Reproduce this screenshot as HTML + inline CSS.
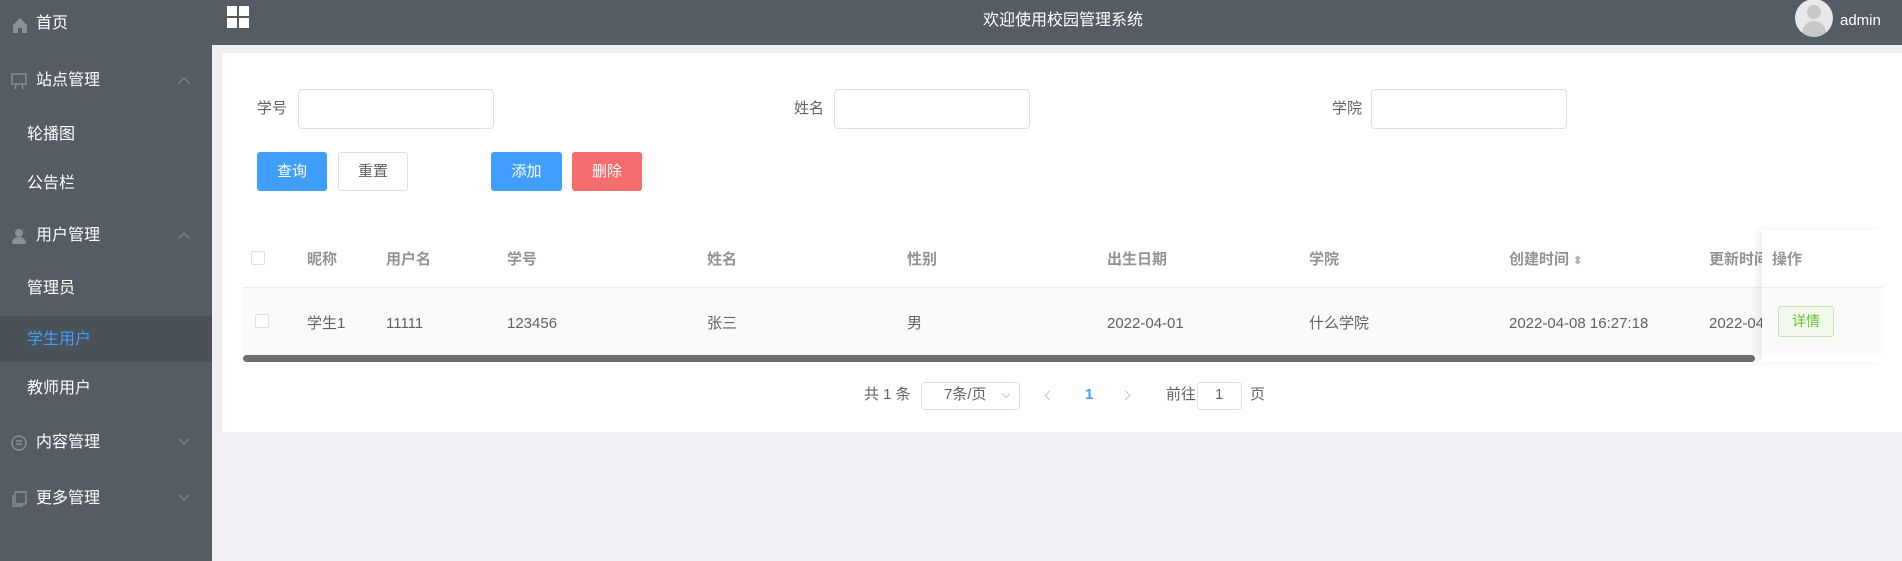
<!DOCTYPE html>
<html><head><meta charset="utf-8"><style>
*{margin:0;padding:0;box-sizing:border-box}
body{width:1902px;height:561px;overflow:hidden;background:#f0f0f4;font-family:"Liberation Sans","Noto Sans CJK SC",sans-serif;position:relative;color:#606266}
.a{position:absolute;white-space:nowrap;line-height:20px}
#side{left:0;top:0;width:212px;height:561px;background:#545c64}
.mi{position:absolute;left:0;width:212px;color:#fff;font-size:16px;line-height:20px;height:20px}
.ic{position:absolute;left:12px;width:18px;height:18px}
.chev{position:absolute;left:180px;width:8px;height:8px;border-left:1px solid #8a9098;border-top:1px solid #8a9098}
#hdr{left:212px;top:0;width:1690px;height:45px;background:#545c64}
#panel{left:222px;top:53px;width:1680px;height:379px;background:#fff}
.lbl{font-size:15px;color:#606266}
.inp{position:absolute;border:1px solid #dcdfe6;border-radius:4px;background:#fff}
.btn{position:absolute;border-radius:3px;font-size:15px;text-align:center;line-height:39px;color:#fff}
.th{font-size:15px;color:#909399;font-weight:bold;top:250px}
.td{font-size:15px;color:#606266;top:314px}
.cb{position:absolute;width:14px;height:14px;border:1px solid #dcdfe6;border-radius:2px;background:#fff}
</style></head><body>
<div id="side" class="a">
 <div class="mi" style="top:14px"><svg class="ic" style="left:11px;top:2px" viewBox="0 0 18 18"><path d="M9 2L2 9v8h5v-5h4v5h5V9z" fill="#8a9098"/></svg><span style="position:absolute;left:36px">首页</span></div>
 <div class="mi" style="top:71px"><svg class="ic" style="left:10px;top:1px" viewBox="0 0 18 18" fill="none" stroke="#8a9098" stroke-width="1.4"><rect x="2" y="2" width="14" height="10"/><path d="M6 12l-1 5M12 12l1 5"/></svg><span style="position:absolute;left:36px">站点管理</span><div class="chev" style="top:8px;transform:rotate(45deg)"></div></div>
 <div class="mi" style="top:125px"><span style="position:absolute;left:27px">轮播图</span></div>
 <div class="mi" style="top:174px"><span style="position:absolute;left:27px">公告栏</span></div>
 <div class="mi" style="top:226px"><svg class="ic" style="left:10px;top:1px" viewBox="0 0 18 18"><circle cx="9" cy="6" r="4" fill="#8a9098"/><path d="M2 17c0-5 3-7 7-7s7 2 7 7z" fill="#8a9098"/></svg><span style="position:absolute;left:36px">用户管理</span><div class="chev" style="top:8px;transform:rotate(45deg)"></div></div>
 <div class="mi" style="top:279px"><span style="position:absolute;left:27px">管理员</span></div>
 <div class="a" style="left:0;top:316px;width:212px;height:46px;background:#4a5159"></div>
 <div class="mi" style="top:330px;color:#409eff"><span style="position:absolute;left:27px">学生用户</span></div>
 <div class="mi" style="top:379px"><span style="position:absolute;left:27px">教师用户</span></div>
 <div class="mi" style="top:433px"><svg class="ic" style="left:10px;top:1px" viewBox="0 0 18 18" fill="none" stroke="#8a9098" stroke-width="1.4"><circle cx="9" cy="9" r="7"/><path d="M6 7h6M6 10h6"/></svg><span style="position:absolute;left:36px">内容管理</span><div class="chev" style="top:2px;transform:rotate(225deg)"></div></div>
 <div class="mi" style="top:489px"><svg class="ic" style="left:10px;top:1px" viewBox="0 0 18 18" fill="none" stroke="#8a9098" stroke-width="1.4"><rect x="5" y="2" width="11" height="12" rx="1"/><path d="M3 5v11h10"/></svg><span style="position:absolute;left:36px">更多管理</span><div class="chev" style="top:2px;transform:rotate(225deg)"></div></div>
</div>
<div id="hdr" class="a">
 <div class="a" style="left:15px;top:6px;width:10px;height:10px;background:#fff"></div>
 <div class="a" style="left:27px;top:6px;width:10px;height:10px;background:#fff"></div>
 <div class="a" style="left:15px;top:18px;width:10px;height:10px;background:#fff"></div>
 <div class="a" style="left:27px;top:18px;width:10px;height:10px;background:#fff"></div>
 <div class="a" style="left:740px;top:11px;width:222px;text-align:center;color:#fff;font-size:16px">欢迎使用校园管理系统</div>
 <div class="a" style="left:1583px;top:-1px;width:38px;height:38px;border-radius:50%;background:#e8e8e8;overflow:hidden"><div class="a" style="left:12px;top:6px;width:14px;height:14px;border-radius:50%;background:#c8c8c8"></div><div class="a" style="left:7px;top:22px;width:24px;height:18px;border-radius:12px 12px 0 0;background:#c8c8c8"></div></div>
 <div class="a" style="left:1628px;top:11px;color:#fff;font-size:15px">admin</div>
</div>
<div id="panel" class="a"></div>
<div class="a lbl" style="left:257px;top:99px">学号</div>
<div class="inp" style="left:298px;top:89px;width:196px;height:40px"></div>
<div class="a lbl" style="left:794px;top:99px">姓名</div>
<div class="inp" style="left:834px;top:89px;width:196px;height:40px"></div>
<div class="a lbl" style="left:1332px;top:99px">学院</div>
<div class="inp" style="left:1371px;top:89px;width:196px;height:40px"></div>
<div class="btn" style="left:257px;top:152px;width:70px;height:39px;background:#409eff">查询</div>
<div class="btn" style="left:338px;top:152px;width:70px;height:39px;background:#fff;border:1px solid #dcdfe6;color:#606266;line-height:37px">重置</div>
<div class="btn" style="left:491px;top:152px;width:71px;height:39px;background:#409eff">添加</div>
<div class="btn" style="left:572px;top:152px;width:70px;height:39px;background:#f56c6c">删除</div>

<div class="a" style="left:243px;top:287px;width:1640px;height:68px;background:#fafafa"></div>
<div class="a" style="left:243px;top:287px;width:1640px;height:1px;background:#ebeef5"></div>
<div class="cb" style="left:251px;top:251px"></div>
<div class="a th" style="left:307px">昵称</div>
<div class="a th" style="left:386px">用户名</div>
<div class="a th" style="left:507px">学号</div>
<div class="a th" style="left:707px">姓名</div>
<div class="a th" style="left:907px">性别</div>
<div class="a th" style="left:1107px">出生日期</div>
<div class="a th" style="left:1309px">学院</div>
<div class="a th" style="left:1509px">创建时间 <span style="font-size:11px;color:#b0b3b8">⬍</span></div>
<div class="a th" style="left:1709px">更新时间</div>
<div class="cb" style="left:255px;top:314px"></div>
<div class="a td" style="left:307px">学生1</div>
<div class="a td" style="left:386px">11111</div>
<div class="a td" style="left:507px">123456</div>
<div class="a td" style="left:707px">张三</div>
<div class="a td" style="left:907px">男</div>
<div class="a td" style="left:1107px">2022-04-01</div>
<div class="a td" style="left:1309px">什么学院</div>
<div class="a td" style="left:1509px">2022-04-08 16:27:18</div>
<div class="a td" style="left:1709px">2022-04-08</div>
<div class="a" style="left:243px;top:355px;width:1512px;height:7px;border-radius:4px;background:#6e6e70"></div>
<div class="a" style="left:1762px;top:230px;width:121px;height:132px;background:#fff;box-shadow:-4px 0 8px rgba(0,0,0,0.08)">
 <div class="a" style="left:0;top:57px;width:121px;height:68px;background:#fafafa;border-top:1px solid #ebeef5"></div>
 <div class="a" style="left:10px;top:20px;font-size:15px;color:#909399;font-weight:bold">操作</div>
 <div class="a" style="left:16px;top:76px;width:56px;height:31px;background:#f0f9eb;border:1px solid #c2e7b0;border-radius:3px;color:#67c23a;font-size:14px;text-align:center;line-height:29px">详情</div>
</div>
<div class="a" style="left:864px;top:385px;font-size:15px">共 1 条</div>
<div class="inp" style="left:921px;top:382px;width:99px;height:28px"></div>
<div class="a" style="left:944px;top:385px;font-size:15px">7条/页</div>
<div class="a" style="left:1003px;top:391px;width:6px;height:6px;border-right:1px solid #c0c4cc;border-bottom:1px solid #c0c4cc;transform:rotate(45deg)"></div>
<div class="a" style="left:1046px;top:392px;width:7px;height:7px;border-left:1px solid #c0c4cc;border-bottom:1px solid #c0c4cc;transform:rotate(45deg)"></div>
<div class="a" style="left:1085px;top:385px;font-size:15px;color:#409eff;font-weight:bold">1</div>
<div class="a" style="left:1122px;top:392px;width:7px;height:7px;border-right:1px solid #c0c4cc;border-top:1px solid #c0c4cc;transform:rotate(45deg)"></div>
<div class="a" style="left:1166px;top:385px;font-size:15px">前往</div>
<div class="inp" style="left:1197px;top:382px;width:45px;height:28px"></div>
<div class="a" style="left:1215px;top:385px;font-size:15px">1</div>
<div class="a" style="left:1250px;top:385px;font-size:15px">页</div>
</body></html>
